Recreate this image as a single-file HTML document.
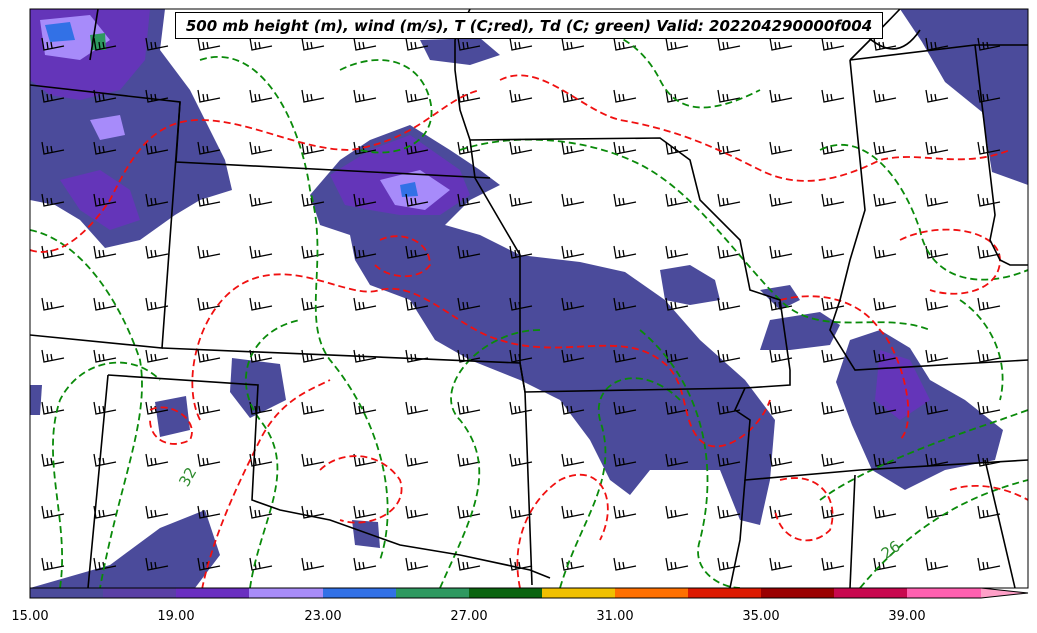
<!DOCTYPE html>
<html><head><meta charset="utf-8"><style>
html,body{margin:0;padding:0;background:#fff;width:1037px;height:633px;overflow:hidden}
svg{display:block}
text{font-family:"DejaVu Sans","Liberation Sans",sans-serif}
</style></head><body>
<svg width="1037" height="633" viewBox="0 0 1037 633" xmlns="http://www.w3.org/2000/svg">
<defs>
<pattern id="barb" x="30" y="20" width="52" height="52" patternUnits="userSpaceOnUse">
<path d="M12 18 L14 30 L34 26 M18 29 L17 22 M22 28 L21 22" stroke="#000" stroke-width="1.3" fill="none"/>
</pattern>
<clipPath id="mc"><rect x="30" y="9" width="998" height="579"/></clipPath>
</defs>
<g clip-path="url(#mc)">
<rect x="30" y="9" width="998" height="579" fill="#fff"/>
<g fill="#4b4b9b">
<path d="M30 9 L165 9 L160 50 L190 90 L225 160 L232 190 L200 200 L175 215 L140 240 L105 248 L80 220 L55 205 L30 200Z"/>
<path d="M310 195 L340 160 L370 140 L410 125 L450 150 L480 170 L500 185 L470 200 L445 225 L480 235 L520 255 L580 262 L625 272 L665 300 L700 340 L745 380 L775 420 L770 480 L760 525 L740 520 L720 470 L680 470 L650 470 L630 495 L610 480 L590 440 L560 400 L520 380 L470 360 L435 340 L410 300 L370 285 L355 260 L350 235 L320 225Z"/>
<path d="M660 270 L690 265 L715 280 L720 300 L690 305 L665 300Z"/>
<path d="M760 290 L790 285 L800 300 L780 310Z"/>
<path d="M770 320 L820 312 L840 325 L830 345 L790 350 L760 350Z"/>
<path d="M850 340 L880 330 L910 348 L930 380 L965 400 L1003 430 L995 460 L945 470 L905 490 L872 470 L852 425 L836 382Z"/>
<path d="M900 9 L1028 9 L1028 185 L992 172 L982 112 L945 82 L922 42Z"/>
<path d="M30 588 L110 565 L160 528 L205 510 L220 555 L195 588Z"/>
<path d="M232 358 L280 364 L286 400 L250 418 L230 392Z"/>
<path d="M155 402 L186 396 L190 430 L160 437Z"/>
<path d="M420 40 L480 38 L500 55 L470 65 L430 60Z"/>
<path d="M30 385 L42 385 L40 415 L30 415Z"/>
<path d="M352 520 L378 522 L380 548 L355 545Z"/>
</g>
<g fill="#6a2fc0" opacity="0.8">
<path d="M30 9 L150 9 L145 60 L120 90 L80 100 L50 95 L30 80Z"/>
<path d="M330 175 L370 150 L410 135 L460 170 L470 195 L440 215 L400 215 L370 210 L345 205Z"/>
<path d="M60 180 L100 170 L130 190 L140 220 L110 230 L80 210Z"/>
<path d="M880 350 L910 360 L930 400 L900 420 L875 400Z"/>
</g>
<g fill="#a78bfa">
<path d="M40 20 L90 15 L110 40 L80 60 L45 55Z"/>
<path d="M380 180 L420 170 L450 190 L425 210 L395 205Z"/>
<path d="M90 120 L120 115 L125 135 L100 140Z"/>
</g>
<g fill="#3271e6"><path d="M45 25 L70 22 L75 40 L50 42Z"/><path d="M400 185 L415 182 L418 196 L402 197Z"/></g>
<g fill="#2e9960"><path d="M90 35 L105 33 L106 50 L92 50Z"/></g>
<rect x="30" y="9" width="998" height="579" fill="url(#barb)"/>
<g fill="none" stroke="#0a8a0a" stroke-width="1.8" stroke-dasharray="7,4">
<path d="M30 230 C80 240 120 300 140 360 C150 420 120 480 100 588"/>
<path d="M60 588 C70 520 40 460 60 400 C80 360 130 350 160 380"/>
<path d="M200 60 C260 40 300 120 310 190 C330 260 300 320 330 360 C380 420 400 500 380 560"/>
<path d="M250 588 C260 520 300 470 260 420 C230 380 250 330 300 320"/>
<path d="M460 150 C520 130 600 140 650 170 C700 200 740 260 780 300 C820 340 880 310 930 330"/>
<path d="M440 588 C470 520 500 470 460 420 C430 390 480 330 540 330"/>
<path d="M560 588 C580 520 620 480 600 420 C590 380 640 360 680 400"/>
<path d="M640 330 C700 380 720 460 700 540 C690 570 720 588 740 588"/>
<path d="M820 150 C860 130 900 170 920 230 C930 280 980 290 1028 270"/>
<path d="M860 588 C900 540 950 500 1028 480"/>
<path d="M820 500 C860 470 940 440 1000 420 L1028 410"/>
<path d="M340 70 C380 50 420 60 430 100 C440 140 400 160 360 150"/>
<path d="M560 30 C600 20 640 40 660 80 C680 120 720 110 760 90"/>
<path d="M960 300 C990 320 1010 360 1000 400"/>
</g>
<g fill="none" stroke="#f01010" stroke-width="1.8" stroke-dasharray="7,4">
<path d="M30 250 C60 260 90 230 110 200 C130 160 150 120 200 120 C250 120 300 150 350 150 C420 140 440 100 480 90"/>
<path d="M200 420 C180 380 200 300 250 280 C300 260 350 300 380 290 C420 280 460 330 500 340 C560 360 620 330 660 360 C690 380 680 420 700 440 C720 460 760 430 770 400"/>
<path d="M200 600 C210 540 240 480 260 440 C280 400 310 390 330 380"/>
<path d="M500 80 C540 60 580 110 620 120 C680 130 720 150 760 170 C800 190 840 180 880 160 C920 150 960 170 1010 150"/>
<path d="M900 240 C940 220 1000 230 1000 260 C1000 290 960 300 930 290"/>
<path d="M780 300 C820 290 860 300 880 330 C900 350 920 420 900 440"/>
<path d="M520 588 C510 540 530 500 560 480 C600 460 620 500 600 540"/>
<path d="M320 470 C340 450 380 450 400 480 C410 510 370 530 340 520"/>
<path d="M780 480 C820 470 840 500 830 530 C810 550 780 540 775 510"/>
<path d="M950 490 C980 480 1010 490 1028 500"/>
<path d="M150 410 C170 400 200 420 190 440 C170 450 150 440 150 420"/>
<path d="M380 240 C400 230 430 240 430 265 C420 280 390 280 375 265"/>
</g>
<g fill="none" stroke="#000" stroke-width="1.6">
<path d="M30 85 L180 102 L162 348 L30 335"/>
<path d="M180 102 L176 162 L490 178"/>
<path d="M98 9 L90 60"/>
<path d="M162 348 L520 363 L525 392 L745 388"/>
<path d="M108 375 L258 385 L252 500 L280 510 L330 520 L400 545 L460 555 L530 570 L550 578"/>
<path d="M108 375 L88 588"/>
<path d="M520 363 L520 255 L475 178 L470 140 L660 138 L690 160 L700 200 L740 240 L750 290 L780 300 L790 370 L790 385 L745 388 L735 410 L750 420 L745 480 L860 470 L1028 460"/>
<path d="M520 363 L525 392 L532 585"/>
<path d="M850 60 L975 45 L995 215 L990 240 L1000 260 L1010 265 L1028 265"/>
<path d="M1028 45 L975 45"/>
<path d="M850 60 L865 210 L850 260 L840 300 L830 330 L855 370 L1028 360"/>
<path d="M470 140 L460 110 L455 70 L455 40 L470 9"/>
<path d="M850 60 L870 40 L900 9"/>
<path d="M745 480 L740 540 L730 588"/>
<path d="M855 475 L850 588"/>
<path d="M985 460 L1015 588"/>
<path d="M860 30 C880 50 900 60 920 30"/>
</g>
</g>
<rect x="30" y="9" width="998" height="579" fill="none" stroke="#000" stroke-width="1"/>
<rect x="175.5" y="12.5" width="707" height="26" fill="#fff" stroke="#000" stroke-width="1"/>
<text x="529" y="31" text-anchor="middle" font-size="15" font-weight="bold" font-style="italic">500 mb height (m), wind (m/s), T (C;red), Td (C; green) Valid: 202204290000f004</text>
<g fill="#2e8b2e" font-size="15"><text x="180" y="485" transform="rotate(-60 186 480)">32</text><text x="880" y="555" transform="rotate(-35 890 548)">26</text></g>
<g stroke="none">
<rect x="30" y="588" width="73" height="10" fill="#4b4b9b"/>
<rect x="103" y="588" width="73" height="10" fill="#5a40a5"/>
<rect x="176" y="588" width="73" height="10" fill="#6a2fc0"/>
<rect x="249" y="588" width="74" height="10" fill="#a88cf8"/>
<rect x="323" y="588" width="73" height="10" fill="#3271e6"/>
<rect x="396" y="588" width="73" height="10" fill="#2e9960"/>
<rect x="469" y="588" width="73" height="10" fill="#0a6410"/>
<rect x="542" y="588" width="73" height="10" fill="#f0c000"/>
<rect x="615" y="588" width="73" height="10" fill="#ff7000"/>
<rect x="688" y="588" width="73" height="10" fill="#dd1a00"/>
<rect x="761" y="588" width="73" height="10" fill="#9a0000"/>
<rect x="834" y="588" width="73" height="10" fill="#c8084f"/>
<rect x="907" y="588" width="74" height="10" fill="#ff60b0"/>
<path d="M981 588 L1028 593 L981 598Z" fill="#ffa0c8"/>
</g>
<path d="M30 588 L981 588 L1028 593 L981 598 L30 598Z" fill="none" stroke="#000" stroke-width="1"/>
<g font-size="13" text-anchor="middle" fill="#000">
<text x="30" y="620">15.00</text><text x="176" y="620">19.00</text><text x="323" y="620">23.00</text><text x="469" y="620">27.00</text><text x="615" y="620">31.00</text><text x="761" y="620">35.00</text><text x="907" y="620">39.00</text>
</g>
</svg>
</body></html>
